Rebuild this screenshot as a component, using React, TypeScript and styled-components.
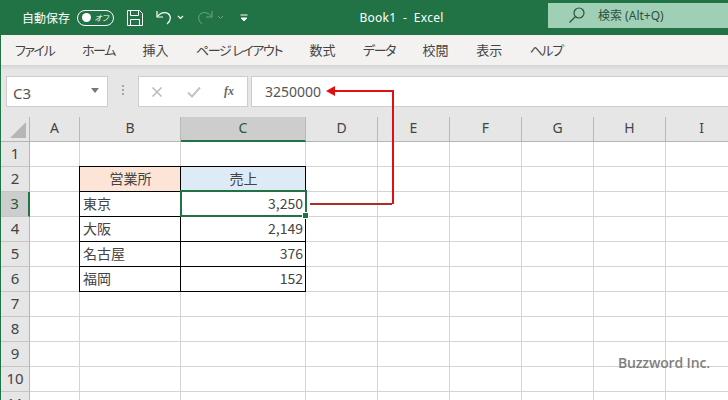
import styled, { createGlobalStyle } from "styled-components";

// #region ##################################################################################### DATA
const TABS = [
  { label: "ファイル", kana: true },
  { label: "ホーム", kana: true },
  { label: "挿入" },
  { label: "ページ レイアウト", kana: true },
  { label: "数式" },
  { label: "データ", kana: true },
  { label: "校閲" },
  { label: "表示" },
  { label: "ヘルプ", kana: true },
];
const COLUMNS = ["A", "B", "C", "D", "E", "F", "G", "H", "I"];
const ROW_COUNT = 11;
const UI_FONT = `"Noto Sans", "Noto Sans CJK JP", sans-serif`;
const CELL_FONT = `"Noto Sans CJK JP", sans-serif`;

type CellData = { text: string; align?: "left" | "center" | "right"; fill?: string };

// key: "<column><row>"
const CELLS: Record<string, CellData> = {
  B2: { text: "営業所", align: "center", fill: "#fce4d6" },
  C2: { text: "売上", align: "center", fill: "#ddebf7" },
  B3: { text: "東京" },
  C3: { text: "3,250", align: "right" },
  B4: { text: "大阪" },
  C4: { text: "2,149", align: "right" },
  B5: { text: "名古屋" },
  C5: { text: "376", align: "right" },
  B6: { text: "福岡" },
  C6: { text: "152", align: "right" },
};
// #endregion

// #region ##################################################################################### STYLES
const GlobalStyle = createGlobalStyle`
  html, body {
    margin: 0;
    padding: 0;
    background: #fff;
  }
`;

const Window = styled.div`
  position: relative;
  width: 728px;
  height: 400px;
  overflow: hidden;
  box-sizing: border-box;
  border-left: 1px solid #217346;
  font-family: ${UI_FONT};
`;

const TitleBar = styled.div`
  display: flex;
  align-items: center;
  height: 35px;
  margin-left: -1px;
  padding-left: 22px;
  background: #217346;
  color: #fff;
  font-size: 12px;
`;

const AutoSave = styled.span`
  width: 48px;
  white-space: nowrap;
`;

const Toggle = styled.div`
  display: flex;
  align-items: center;
  justify-content: space-between;
  box-sizing: border-box;
  width: 38px;
  height: 16px;
  margin-left: 7px;
  padding: 0 5px 0 4px;
  border: 1px solid #fff;
  border-radius: 8px;
  font-size: 8px;
  font-style: italic;
  font-feature-settings: "palt";

  &::before {
    content: "";
    width: 9px;
    height: 9px;
    border-radius: 50%;
    background: #fff;
  }
`;

const QuickIcon = styled.svg<{ $left: number }>`
  flex: none;
  margin-left: ${(props) => props.$left}px;
  fill: none;
  stroke: currentColor;
`;

const BookTitle = styled.span`
  width: 114px;
  margin-left: 111px;
  font-size: 12px;
  letter-spacing: 0.25px;
  white-space: pre;
`;

const SearchBox = styled.div`
  display: flex;
  align-items: center;
  gap: 12px;
  flex: none;
  width: 180px;
  height: 25px;
  margin: 0 0 5px 77px;
  padding-left: 20px;
  box-sizing: border-box;
  background: #9fd0b5;
  color: #2f4f3f;
  font-size: 12px;
`;

const TabBar = styled.div`
  display: flex;
  align-items: center;
  gap: 27.5px;
  box-sizing: border-box;
  height: 30px;
  padding: 0 0 1px 14px;
  background: #f3f2f1;
  color: #444;
  font-size: 13px;
  font-feature-settings: "palt";
`;

const Tab = styled.span<{ $kana?: boolean }>`
  letter-spacing: ${(props) => (props.$kana ? "-1.4px" : "0")};
  white-space: pre;
`;

const FormulaBar = styled.div`
  display: flex;
  align-items: flex-start;
  box-sizing: border-box;
  height: 52px;
  padding: 11px 0 0 5px;
  background: linear-gradient(#d4d4d4 0, #e6e6e6 5px);
`;

const InputBox = styled.div`
  display: flex;
  align-items: center;
  box-sizing: border-box;
  height: 31px;
  background: #fff;
  border: 1px solid #cdcdcd;
  color: #555;
`;

const NameBox = styled(InputBox)`
  justify-content: space-between;
  width: 102px;
  padding: 3px 8px 0 6px;
  font-size: 15px;
`;

const Caret = styled.span`
  width: 0;
  height: 0;
  margin-top: -6px;
  border-left: 4px solid transparent;
  border-right: 4px solid transparent;
  border-top: 5px solid #777;
`;

const Grip = styled.span`
  width: 2px;
  height: 11px;
  margin: 9px 14px 0 14px;
  background: repeating-linear-gradient(#a5a5a5 0 2px, transparent 2px 4px);
`;

const ActionBox = styled(InputBox)`
  justify-content: space-between;
  width: 110px;
  padding: 0 13px 0 12px;
`;

const FxLabel = styled.span`
  font-family: "Liberation Serif", serif;
  font-size: 12px;
  font-weight: bold;
  font-style: italic;
  color: #666;
`;

const FormulaInput = styled(InputBox)`
  flex: 1;
  margin-left: 3px;
  padding-left: 13px;
  border-right: 0;
  font-size: 14px;
`;

const Sheet = styled.div`
  display: grid;
  grid-template-columns: 29px 50px 101px 125px repeat(6, 72px);
  grid-auto-rows: 25px;
  font-family: ${CELL_FONT};
`;

const Corner = styled.div`
  display: flex;
  align-items: flex-end;
  justify-content: flex-end;
  box-sizing: border-box;
  padding: 0 3px 3px 0;
  background: #e6e6e6;
  border-right: 1px solid #b5b5b5;
  border-bottom: 1px solid #b5b5b5;

  &::after {
    content: "";
    width: 0;
    height: 0;
    border-left: 16px solid transparent;
    border-bottom: 16px solid #b6b6b6;
  }
`;

const ColumnHead = styled.div<{ $active?: boolean }>`
  display: flex;
  align-items: center;
  justify-content: center;
  box-sizing: border-box;
  padding-bottom: 3px;
  background: ${(props) => (props.$active ? "#cdcdcd" : "#e6e6e6")};
  border-right: 1px solid #b9b9b9;
  border-bottom: ${(props) => (props.$active ? "2px solid #217346" : "1px solid #b5b5b5")};
  color: ${(props) => (props.$active ? "#1f5c3c" : "#444")};
  font-family: ${UI_FONT};
  font-size: 14px;
`;

const RowHead = styled.div<{ $active?: boolean }>`
  display: flex;
  align-items: center;
  justify-content: center;
  box-sizing: border-box;
  padding-bottom: 2px;
  background: ${(props) => (props.$active ? "#cdcdcd" : "#e6e6e6")};
  border-right: ${(props) => (props.$active ? "2px solid #217346" : "1px solid #b5b5b5")};
  border-bottom: 1px solid #c6c6c6;
  color: ${(props) => (props.$active ? "#1f5c3c" : "#444")};
  font-family: ${UI_FONT};
  font-size: 15px;
`;

const Cell = styled.div<{ $align?: string; $fill?: string; $boxed?: boolean }>`
  display: flex;
  align-items: center;
  justify-content: ${(props) =>
    props.$align === "right" ? "flex-end" : props.$align === "center" ? "center" : "flex-start"};
  box-sizing: border-box;
  padding: 0 2px 3px 3px;
  z-index: ${(props) => (props.$boxed ? 1 : 0)};
  background: ${(props) => props.$fill ?? "#fff"};
  border-right: 1px solid ${(props) => (props.$boxed ? "#000" : "#d4d4d4")};
  border-bottom: 1px solid ${(props) => (props.$boxed ? "#000" : "#d4d4d4")};
  box-shadow: ${(props) => (props.$boxed ? "-1px -1px 0 #000, -1px 0 0 #000, 0 -1px 0 #000" : "none")};
  color: #444;
  font-size: 14px;
  white-space: nowrap;
`;

const Selection = styled.div`
  position: absolute;
  left: 179px;
  top: 190px;
  width: 127px;
  height: 27px;
  box-sizing: border-box;
  z-index: 2;
  border: 2px solid #217346;

  &::after {
    content: "";
    position: absolute;
    right: -3px;
    bottom: -3px;
    width: 5px;
    height: 5px;
    background: #217346;
    outline: 1px solid #fff;
  }
`;

const ArrowLayer = styled.svg`
  position: absolute;
  left: -1px;
  top: 0;
  z-index: 3;
  pointer-events: none;
`;

const Watermark = styled.div`
  position: absolute;
  left: 617px;
  top: 353px;
  z-index: 3;
  color: #808080;
  font-family: "Open Sans", sans-serif;
  font-size: 14px;
  font-weight: 600;
  letter-spacing: -0.15px;
`;
// #endregion

// #region ##################################################################################### COMPONENT
const App = () => {
  const rows = Array.from({ length: ROW_COUNT }, (_, i) => i + 1);

  return (
    <Window>
      <GlobalStyle />

      <TitleBar>
        <AutoSave>自動保存</AutoSave>
        <Toggle>オフ</Toggle>

        <QuickIcon $left={13} width="16" height="16" viewBox="0 0 16 16" strokeWidth="1">
          <path d="M.5.5h12l3 3v12H.5z" />
          <path d="M3.5.5v5h8v-5M3.5 15.5v-6h9v6" />
        </QuickIcon>
        <QuickIcon $left={13} width="16" height="16" viewBox="0 0 16 16" strokeWidth="1.2">
          <path d="M1 1v6h6" />
          <path d="M1.5 6.5C4 3 8.500 1.500 12 3.500c3.500 2.500 3 7-1 10.500" />
        </QuickIcon>
        <QuickIcon $left={5} width="7" height="5" viewBox="0 0 7 5" strokeWidth="1.2">
          <path d="M1 1l2.500 2.500L6 1" />
        </QuickIcon>
        <QuickIcon $left={13} width="16" height="16" viewBox="0 0 16 16" strokeWidth="1" opacity="0.35">
          <path d="M15 1v6H9" />
          <path d="M14.500 6.500C12 3 7.500 1.500 4 3.500.500 6 1 10.500 5 14" />
        </QuickIcon>
        <QuickIcon $left={4} width="7" height="5" viewBox="0 0 7 5" strokeWidth="1" opacity="0.35">
          <path d="M1 1l2.500 2.500L6 1" />
        </QuickIcon>
        <QuickIcon $left={16} width="8" height="8" viewBox="0 0 8 8" strokeWidth="1">
          <path d="M.5 1h7" />
          <path d="M1 4l3 3 3-3z" fill="currentColor" />
        </QuickIcon>

        <BookTitle>{"Book1  -  Excel"}</BookTitle>

        <SearchBox>
          <svg width="18" height="18" viewBox="0 0 18 18" fill="none" stroke="currentColor" strokeWidth="1.2">
            <circle cx="11" cy="7" r="5" />
            <path d="M7.500 10.500L1.500 16.500" />
          </svg>
          <span>検索 (Alt+Q)</span>
        </SearchBox>
      </TitleBar>

      <TabBar>
        {TABS.map((tab) => (
          <Tab key={tab.label} $kana={tab.kana}>
            {tab.label}
          </Tab>
        ))}
      </TabBar>

      <FormulaBar>
        <NameBox>
          C3
          <Caret />
        </NameBox>
        <Grip />
        <ActionBox>
          <svg width="12" height="12" viewBox="0 0 12 12" stroke="#bdbdbd" strokeWidth="1.6" fill="none">
            <path d="M1.500 1.500l9 9M10.500 1.500l-9 9" />
          </svg>
          <svg width="14" height="12" viewBox="0 0 14 12" stroke="#c4c4c4" strokeWidth="2" fill="none">
            <path d="M1 6.500L5 10.500 13 1.500" />
          </svg>
          <FxLabel>fx</FxLabel>
        </ActionBox>
        <FormulaInput>3250000</FormulaInput>
      </FormulaBar>

      <Sheet>
        <Corner />
        {COLUMNS.map((column) => (
          <ColumnHead key={column} $active={column === "C"}>
            {column}
          </ColumnHead>
        ))}
        {rows.map((row) => [
          <RowHead key={`head-${row}`} $active={row === 3}>
            {row}
          </RowHead>,
          ...COLUMNS.map((column) => {
            const cell = CELLS[`${column}${row}`];
            return (
              <Cell key={`${column}${row}`} $align={cell?.align} $fill={cell?.fill} $boxed={!!cell}>
                {cell?.text}
              </Cell>
            );
          }),
        ])}
      </Sheet>

      <Selection />

      <ArrowLayer width="728" height="400" viewBox="0 0 728 400" fill="none">
        <path d="M393 204V91H334" stroke="#e01010" strokeWidth="2" />
        <path d="M310 204H392" stroke="#b02a2a" strokeWidth="2" />
        <path d="M326 91l9-5v10z" fill="#e01010" />
      </ArrowLayer>

      <Watermark>Buzzword Inc.</Watermark>
    </Window>
  );
};
// #endregion

// #region ##################################################################################### EXPORTS
export default App;
// #endregion
